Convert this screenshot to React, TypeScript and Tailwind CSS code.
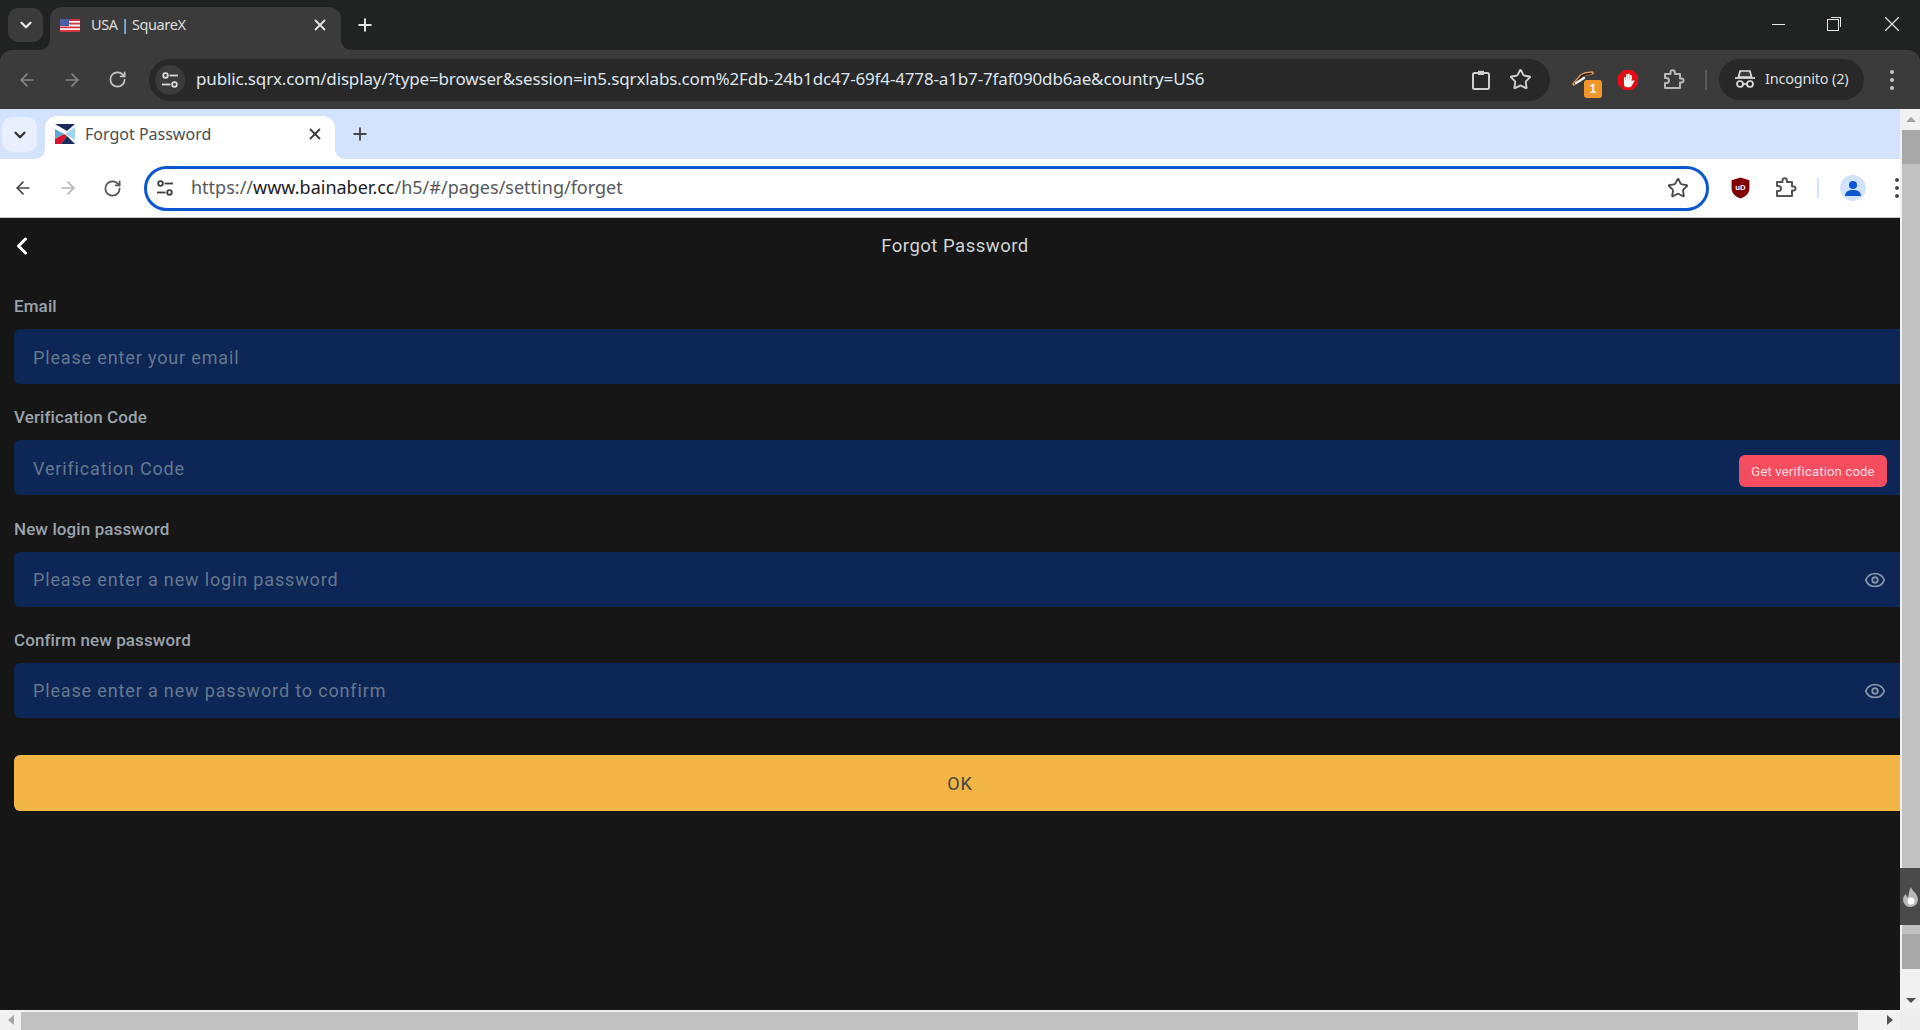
import React from "react";
import { ChevronDown, X, Plus, ArrowLeft, ArrowRight, RotateCw, Star, ChevronLeft, Eye } from "lucide-react";

const Tune = ({ c }: { c: string }) => (
  <svg width="20" height="20" viewBox="0 0 20 20" fill="none" stroke={c} strokeWidth="1.8">
    <circle cx="5.5" cy="5.5" r="2.3" />
    <path d="M9.5 5.5H18" />
    <path d="M2 14.5h8.5" />
    <circle cx="14.5" cy="14.5" r="2.3" />
  </svg>
);

const PuzzleIcon = ({ c }: { c: string }) => (
  <svg width="24" height="24" viewBox="0 0 24 24" fill="none" stroke={c} strokeWidth="2" strokeLinejoin="round">
    <path d="M4 6h5.500V4.500a2.200 2.200 0 0 1 4.400 0V6H19v4.500h1.500a2 2 0 0 1 0 4H19V20H4v-5h1.500a2.500 2.500 0 0 0 0-5H4z" />
  </svg>
);

const Dots = ({ c }: { c: string }) => (
  <div className="flex flex-col gap-[4px]">
    <div className="w-[4px] h-[4px] rounded-full" style={{ background: c }} />
    <div className="w-[4px] h-[4px] rounded-full" style={{ background: c }} />
    <div className="w-[4px] h-[4px] rounded-full" style={{ background: c }} />
  </div>
);

const Corner = ({ c, side }: { c: string; side: "l" | "r" }) => (
  <svg
    width="10"
    height="10"
    viewBox="0 0 10 10"
    className={side === "l" ? "absolute bottom-0 -left-[10px]" : "absolute bottom-0 -right-[10px]"}
  >
    <path d={side === "l" ? "M10 0V10H0A10 10 0 0 0 10 0z" : "M0 0V10H10A10 10 0 0 1 0 0z"} fill={c} />
  </svg>
);

const Flag = () => (
  <svg width="20" height="13" viewBox="0 0 20 13">
    <rect width="20" height="13" fill="#f4f4f4" />
    <path d="M0 0h20v1.9H0zM0 3.7h20v1.9H0zM0 7.4h20v1.9H0zM0 11.1h20V13H0z" fill="#d8343f" />
    <rect width="9" height="7" fill="#4a5fa8" />
  </svg>
);

const Favicon = () => (
  <svg width="20" height="24" viewBox="0 0 20 24">
    <rect x="0" y="2" width="20" height="20" rx="2" fill="#fff" />
    <path d="M0 2h20l-8 7z" fill="#1a2a5e" />
    <path d="M20 5v13l-10-6z" fill="#9fd4ef" />
    <path d="M0 7l9 5-9 5z" fill="#5aa8dc" />
    <path d="M0 17l9-5 3 2-6 8H0z" fill="#d6152c" />
    <path d="M6 22l6-8 8 8z" fill="#1a2a5e" />
  </svg>
);

const Incognito = () => (
  <svg width="22" height="20" viewBox="0 0 22 20" fill="none" stroke="#e0e0e0" strokeWidth="1.7">
    <path d="M4.500 8l1.600-6h9.800l1.600 6z" fill="#3a3a3a" />
    <path d="M1 9h20" />
    <circle cx="6" cy="15" r="3" />
    <circle cx="16" cy="15" r="3" />
    <path d="M9 15h4" />
  </svg>
);

const StopHand = () => (
  <svg width="22" height="22" viewBox="0 0 22 22">
    <polygon points="6.5,1 15.5,1 21,6.5 21,15.5 15.5,21 6.5,21 1,15.5 1,6.5" fill="#e10f14" />
    <path
      d="M7 8.5a.9.9 0 0 1 1.700 0V11h.3V5.500a.9.9 0 0 1 1.700 0V10.500h.3V5a.9.9 0 0 1 1.700 0v5.700h.3V6.500a.9.9 0 0 1 1.700 0V13l1-1.500a.9.9 0 0 1 1.500 1L14.500 17a2.500 2.500 0 0 1-2.200 1.300H10c-1.800 0-3-1.300-3-3z"
      fill="#fff"
    />
  </svg>
);

const TigerBadge = () => (
  <div className="relative w-[24px] h-[24px]">
    <svg width="22" height="20" viewBox="0 0 22 20" fill="none" className="absolute -left-[1px] top-0">
      <path d="M2 16l7-8 4-2 7-1" stroke="#e39a4a" strokeWidth="3.400" strokeLinecap="round" />
      <path d="M3 15.500L10 8l3-1.500 6-1" stroke="#111" strokeWidth="1.700" strokeLinecap="round" />
      <path d="M4 15l8-5" stroke="#f4f4f4" strokeWidth="2.400" strokeLinecap="round" />
    </svg>
    <div className="absolute left-[11px] top-[12px] w-[18px] h-[18px] rounded-[3px] bg-[#f0962a] text-white text-[12px] font-bold flex items-center justify-center font-['Liberation_Sans',sans-serif]">
      1
    </div>
  </div>
);

const Shield = () => (
  <svg width="19" height="22" viewBox="0 0 18 21">
    <path d="M9 0.500L17.500 3V11c0 5-4 8-8.500 9.500C4.500 19 .5 16 .5 11V3z" fill="#800000" />
    <text x="9" y="12.500" textAnchor="middle" fontSize="7.500" fontWeight="700" fill="#fff" fontFamily="Liberation Sans, sans-serif">
      uD
    </text>
  </svg>
);

const labelCls =
  "h-[56.2px] flex items-end pb-[11px] text-[17px] leading-[24px] tracking-[0.1px] font-medium text-[#9aa3ab]";
const boxCls =
  "h-[55px] w-full rounded-[6px] bg-[#0c2656] flex items-center pl-[19px] pt-[1px] text-[18px] text-[#66788f] tracking-[0.85px] relative";

const Field = ({ label, placeholder, children }: { label: string; placeholder: string; children?: React.ReactNode }) => (
  <div>
    <div className={labelCls}>{label}</div>
    <div className={boxCls}>
      <span>{placeholder}</span>
      {children}
    </div>
  </div>
);

const EyeBtn = () => (
  <Eye size={22} strokeWidth={2} className="absolute right-[20px] top-[17px] text-[#8593a8]" />
);

export default function App() {
  return (
    <div className="w-[1920px] h-[1030px] overflow-hidden flex flex-col bg-[#212322] font-['Noto_Sans',sans-serif]">
      {/* outer tab strip */}
      <div className="h-[50px] shrink-0 flex items-start pl-[8px] pt-[8px] text-[#e3e3e3] relative">
        <div className="w-[35px] h-[34px] rounded-[10px] bg-[#3b3b3b] flex items-center justify-center">
          <ChevronDown size={18} strokeWidth={3} className="text-[#e8e8e8]" />
        </div>
        <div className="relative ml-[7px] w-[291px] h-[43px] -mt-[1px] rounded-t-[12px] bg-[#3b3b3b] flex items-center pl-[10px] pb-[7px]">
          <Corner c="#3b3b3b" side="l" />
          <Corner c="#3b3b3b" side="r" />
          <Flag />
          <span className="ml-[11px] text-[14.500px] tracking-[-0.4px] text-[#dedede]">USA | SquareX</span>
          <X size={18} strokeWidth={2.400} className="absolute right-[12px] top-[9px] text-[#e3e3e3]" />
        </div>
        <Plus size={20} strokeWidth={2.400} className="ml-[14px] mt-[7px] text-[#e3e3e3]" />
        <div className="ml-auto flex items-center h-[32px] mr-[15px] text-[#e8e8e8]">
          <div className="w-[13px] h-[1px] bg-[#e8e8e8]" />
          <div className="ml-[42px] relative w-[12px] h-[12px] border border-[#e8e8e8] bg-[#212322] mt-[1px]">
            <div className="absolute -top-[3px] -right-[3px] w-[10px] h-[10px] border-t border-r border-[#e8e8e8]" />
          </div>
          <X size={26} strokeWidth={1} className="ml-[40px]" />
        </div>
      </div>

      {/* outer toolbar */}
      <div className="h-[59px] shrink-0 bg-[#3b3b3b] rounded-t-[12px] flex items-center">
        <ArrowLeft size={20} strokeWidth={2} className="ml-[17px] text-[#858585]" />
        <ArrowRight size={20} strokeWidth={2} className="ml-[25px] text-[#858585]" />
        <RotateCw size={19} strokeWidth={2.200} className="ml-[26px] text-[#c4c4c4]" />
        <div className="ml-[22px] w-[1401px] h-[42px] rounded-full bg-[#282828] flex items-center pl-[6px]">
          <div className="w-[30px] h-[30px] rounded-full bg-[#3b3b3b] flex items-center justify-center">
            <Tune c="#dcdcdc" />
          </div>
          <span className="ml-[11px] -mt-[1px] text-[17px] tracking-[-0.15px] text-[#dfe6ee] whitespace-nowrap">
            public.sqrx.com/display/?type=browser&amp;session=in5.sqrxlabs.com%2Fdb-24b1dc47-69f4-4778-a1b7-7faf090db6ae&amp;country=US6
          </span>
          <div className="ml-auto flex items-center gap-[16px] mr-[18px]">
            <svg width="24" height="24" viewBox="0 0 24 24" fill="none" stroke="#cfcfcf" strokeWidth="2">
              <rect x="4" y="5" width="16" height="16" rx="1.500" />
              <path d="M9 2.800h6V7H9z" fill="#cfcfcf" stroke="none" />
            </svg>
            <Star size={23} strokeWidth={2} className="text-[#cfcfcf]" />
          </div>
        </div>
        <div className="ml-[23px] w-[24px] flex items-center">
          <TigerBadge />
        </div>
        <div className="ml-[20px]">
          <StopHand />
        </div>
        <div className="ml-[22px]">
          <PuzzleIcon c="#b8b8b8" />
        </div>
        <div className="ml-[20px] w-[2px] h-[20px] bg-[#5a5a5a]" />
        <div className="ml-[12px] w-[145px] h-[41px] rounded-full bg-[#282828] flex items-center pl-[15px] -mt-[1px]">
          <Incognito />
          <span className="ml-[9px] text-[14.500px] tracking-[-0.2px] text-[#dddddd]">Incognito (2)</span>
        </div>
        <div className="ml-[26px]">
          <Dots c="#c8c8c8" />
        </div>
      </div>

      {/* inner browser */}
      <div className="flex-1 min-h-0 flex">
        <div className="w-[1900px] shrink-0 flex flex-col overflow-hidden">
          {/* inner tab strip */}
          <div className="h-[50px] shrink-0 bg-[#d3e3fd] flex items-start pl-[2px] pt-[8px] text-[#333]">
            <div className="w-[35px] h-[35px] rounded-[10px] bg-[#e8f0fe] flex items-center justify-center">
              <ChevronDown size={18} strokeWidth={3} className="text-[#333]" />
            </div>
            <div className="relative ml-[8px] w-[290px] h-[43px] -mt-[1px] rounded-t-[12px] bg-white flex items-center pl-[10px] pb-[7px]">
              <Corner c="#ffffff" side="l" />
              <Corner c="#ffffff" side="r" />
              <Favicon />
              <span className="ml-[10px] text-[16px] text-[#4a4d50]">Forgot Password</span>
              <X size={18} strokeWidth={2.400} className="absolute right-[11px] top-[9px] text-[#3a3a3a]" />
            </div>
            <Plus size={20} strokeWidth={2.200} className="ml-[15px] mt-[7px] text-[#444]" />
          </div>

          {/* inner toolbar */}
          <div className="h-[59px] shrink-0 bg-white border-b border-[#c7c7c7] flex items-center">
            <ArrowLeft size={20} strokeWidth={2} className="ml-[13px] text-[#474747]" />
            <ArrowRight size={20} strokeWidth={2} className="ml-[25px] text-[#b5b5b5]" />
            <RotateCw size={19} strokeWidth={2.200} className="ml-[25px] text-[#555]" />
            <div className="ml-[22px] w-[1565px] h-[45px] rounded-full border-[3px] border-[#0b57d0] bg-white flex items-center pl-[8px]">
              <Tune c="#3c3c3c" />
              <span className="ml-[16px] -mt-[1px] text-[18px] text-[#55585b] whitespace-nowrap">
                https://<span className="text-[#202124]">www.bainaber.cc</span>/h5/#/pages/setting/forget
              </span>
              <Star size={22} strokeWidth={2} className="ml-auto mr-[17px] text-[#474747]" />
            </div>
            <div className="ml-[22px]">
              <Shield />
            </div>
            <div className="ml-[23px]">
              <PuzzleIcon c="#555555" />
            </div>
            <div className="ml-[20px] w-[2px] h-[20px] bg-[#d3e3fd]" />
            <div className="ml-[21px] w-[26px] h-[26px] rounded-full bg-[#d3e3fd] flex flex-col items-center justify-center shrink-0">
              <div className="w-[8px] h-[8px] rounded-full bg-[#0b57d0]" />
              <div className="w-[16px] h-[6px] rounded-t-[6px] bg-[#0b57d0] mt-[1px]" />
            </div>
            <div className="ml-[29px] shrink-0">
              <Dots c="#4a4a4a" />
            </div>
          </div>

          {/* page */}
          <div className="flex-1 min-h-0 bg-[#161616] overflow-hidden font-['Roboto',sans-serif]">
            <div className="w-[1920px] px-[14px]">
              <div className="h-[55px] flex items-center justify-center relative pr-[10px] pt-[2px]">
                <ChevronLeft size={28} strokeWidth={2.600} className="absolute -left-[6px] top-[14px] text-white" />
                <span className="text-[18.500px] tracking-[0.5px] text-[#d4d4d4]">Forgot Password</span>
              </div>
              <Field label="Email" placeholder="Please enter your email" />
              <Field label="Verification Code" placeholder="Verification Code">
                <div className="absolute right-[19px] top-[15px] w-[148px] h-[32px] rounded-[6px] bg-[#f54d60] text-[#fcdde0] text-[13px] tracking-[0.2px] pt-[1px] flex items-center justify-center">
                  Get verification code
                </div>
              </Field>
              <Field label="New login password" placeholder="Please enter a new login password">
                <EyeBtn />
              </Field>
              <Field label="Confirm new password" placeholder="Please enter a new password to confirm">
                <EyeBtn />
              </Field>
              <div className="mt-[37px] h-[56px] rounded-[6px] bg-[#f3b546] pt-[1px] flex items-center justify-center text-[18px] tracking-[0.8px] text-[#46463f]">
                OK
              </div>
            </div>
          </div>

          {/* horizontal scrollbar */}
          <div className="h-[20px] shrink-0 bg-[#f1f1f1] flex items-center">
            <div className="w-[21px] flex justify-center">
              <div className="w-0 h-0 border-y-[5px] border-y-transparent border-r-[6px] border-r-[#a3a3a3]" />
            </div>
            <div className="w-[1837px] h-[18px] mt-[2px] bg-[#c1c1c1]" />
            <div className="flex-1 flex justify-end pr-[7px]">
              <div className="w-0 h-0 border-y-[5px] border-y-transparent border-l-[6px] border-l-[#505050]" />
            </div>
          </div>
        </div>

        {/* vertical scrollbar */}
        <div className="w-[20px] shrink-0 bg-[#f1f1f1] flex flex-col pl-[2px] relative">
          <div className="h-[21px] flex items-center justify-center">
            <div className="w-0 h-0 border-x-[5px] border-x-transparent border-b-[5px] border-b-[#a3a3a3]" />
          </div>
          <div className="h-[34px] bg-[#a8a8a8]" />
          <div className="h-[770px] bg-[#c1c1c1]" />
          <div className="h-[35px] bg-[#a8a8a8]" />
          <div className="flex-1 flex items-start justify-center pt-[29px]">
            <div className="w-0 h-0 border-x-[5px] border-x-transparent border-t-[5px] border-t-[#505050]" />
          </div>
          <div className="h-[20px] -ml-[2px] bg-[#ededed]" />
          {/* flame overlay */}
          <div className="absolute left-0 top-[759px] w-[20px] h-[57px] bg-[#4a4a4a] flex items-center justify-center">
            <svg width="17" height="22" viewBox="0 0 17 22">
              <path d="M9 1c1 4 6 6 7 12a7.500 7.500 0 0 1-15 1c0-3 1.500-5 3-6 0 2 1 3 2 3 1-3 1-7 3-10z" fill="#b9b9b9" />
              <circle cx="9" cy="15" r="3.500" fill="#fff" />
            </svg>
          </div>
        </div>
      </div>
    </div>
  );
}
